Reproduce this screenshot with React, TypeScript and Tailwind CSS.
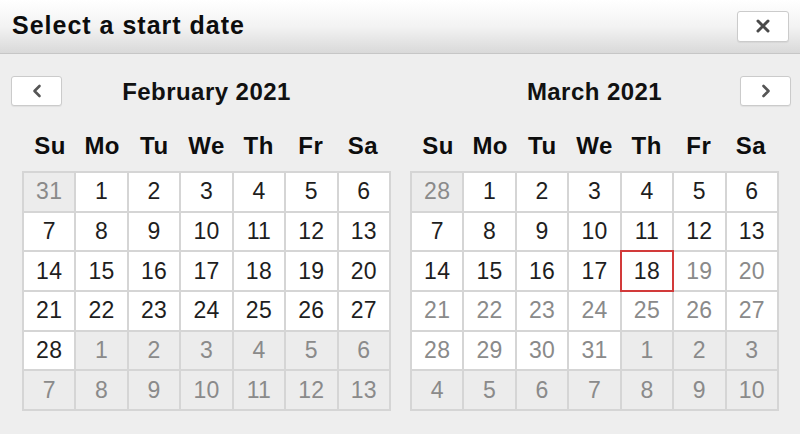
import React from "react";

type Cell = { d: number; muted?: boolean; grayText?: boolean; today?: boolean };

const weekdays = ["Su", "Mo", "Tu", "We", "Th", "Fr", "Sa"];

function range(a: number, b: number) {
  const r: number[] = [];
  for (let i = a; i <= b; i++) r.push(i);
  return r;
}

const feb: Cell[] = [
  { d: 31, muted: true },
  ...range(1, 28).map((d) => ({ d })),
  ...range(1, 13).map((d) => ({ d, muted: true })),
];

const mar: Cell[] = [
  { d: 28, muted: true },
  ...range(1, 31).map((d) => ({ d, grayText: d > 18, today: d === 18 })),
  ...range(1, 10).map((d) => ({ d, muted: true })),
];

function Month({ title, cells, side }: { title: string; cells: Cell[]; side: "left" | "right" }) {
  return (
    <div className="w-[369px] flex flex-col">
      <div className="grid grid-cols-[1fr_auto_1fr] items-center h-[30px]">
        <div className="flex justify-start">
          {side === "left" && (
            <button className="-ml-[11px] w-[51px] h-[30px] bg-white border border-[#cbcbcb] rounded-[3px] shadow-[0_1px_1px_rgba(0,0,0,0.06)] flex items-center justify-center">
              <svg width="12" height="14" viewBox="0 0 12 14">
                <path d="M8.5 2 L3.5 7 L8.5 12" fill="none" stroke="#555" strokeWidth="2.6" strokeLinecap="round" strokeLinejoin="round" />
              </svg>
            </button>
          )}
        </div>
        <div className="text-[24px] font-bold text-[#111] leading-none tracking-[0.45px] pt-[1px]">{title}</div>
        <div className="flex justify-end">
          {side === "right" && (
            <button className="-mr-[12px] w-[51px] h-[30px] bg-white border border-[#cbcbcb] rounded-[3px] shadow-[0_1px_1px_rgba(0,0,0,0.06)] flex items-center justify-center">
              <svg width="12" height="14" viewBox="0 0 12 14">
                <path d="M3.5 2 L8.5 7 L3.5 12" fill="none" stroke="#555" strokeWidth="2.6" strokeLinecap="round" strokeLinejoin="round" />
              </svg>
            </button>
          )}
        </div>
      </div>
      <div className="grid grid-cols-7 mt-[22px] h-[36px] items-center px-[2px]">
        {weekdays.map((w) => (
          <div key={w} className="text-center text-[24px] font-bold text-[#0d0d0d] leading-none tracking-[0.5px]">
            {w}
          </div>
        ))}
      </div>
      <div className="mt-[7px] grid grid-cols-7 grid-rows-6 h-[240px] gap-[2px] p-[2px] bg-[#d5d5d5]">
        {cells.map((c, i) => (
          <div
            key={i}
            className={
              "flex items-center justify-center text-[23px] leading-none tracking-[0.3px] " +
              (c.muted ? "bg-[#ececec] text-[#8a8a8a] " : "bg-white ") +
              (c.grayText ? "text-[#8a8a8a] " : c.muted ? "" : "text-[#1e1e1e] ") +
              (c.today ? "relative z-10 outline outline-2 outline-[#d23a3a]" : "")
            }
          >
            {c.d}
          </div>
        ))}
      </div>
    </div>
  );
}

export default function App() {
  return (
    <div
      className="w-[800px] h-[434px] bg-[#eeeeee] flex flex-col overflow-hidden"
      style={{ fontFamily: '"Liberation Sans", Arial, sans-serif' }}
    >
      <div className="h-[54px] shrink-0 flex items-center justify-between pl-[12px] pr-[11px] bg-gradient-to-b from-[#ffffff] via-[#f3f3f3] to-[#d9d9d9] border-b border-[#c6c6c6]">
        <div className="text-[25px] font-bold text-[#0d0d0d] tracking-[1px] -mt-[1px]">Select a start date</div>
        <button className="w-[52px] h-[31px] -mt-[1px] bg-white border border-[#cbcbcb] rounded-[3px] shadow-[0_1px_1px_rgba(0,0,0,0.06)] flex items-center justify-center">
          <svg width="16" height="16" viewBox="0 0 16 16">
            <path d="M3 3 L13 13 M13 3 L3 13" stroke="#4a4a4a" strokeWidth="3" strokeLinecap="round" />
          </svg>
        </button>
      </div>
      <div className="flex gap-[19px] pl-[22px] pt-[22px]">
        <Month title="February 2021" cells={feb} side="left" />
        <Month title="March 2021" cells={mar} side="right" />
      </div>
    </div>
  );
}
